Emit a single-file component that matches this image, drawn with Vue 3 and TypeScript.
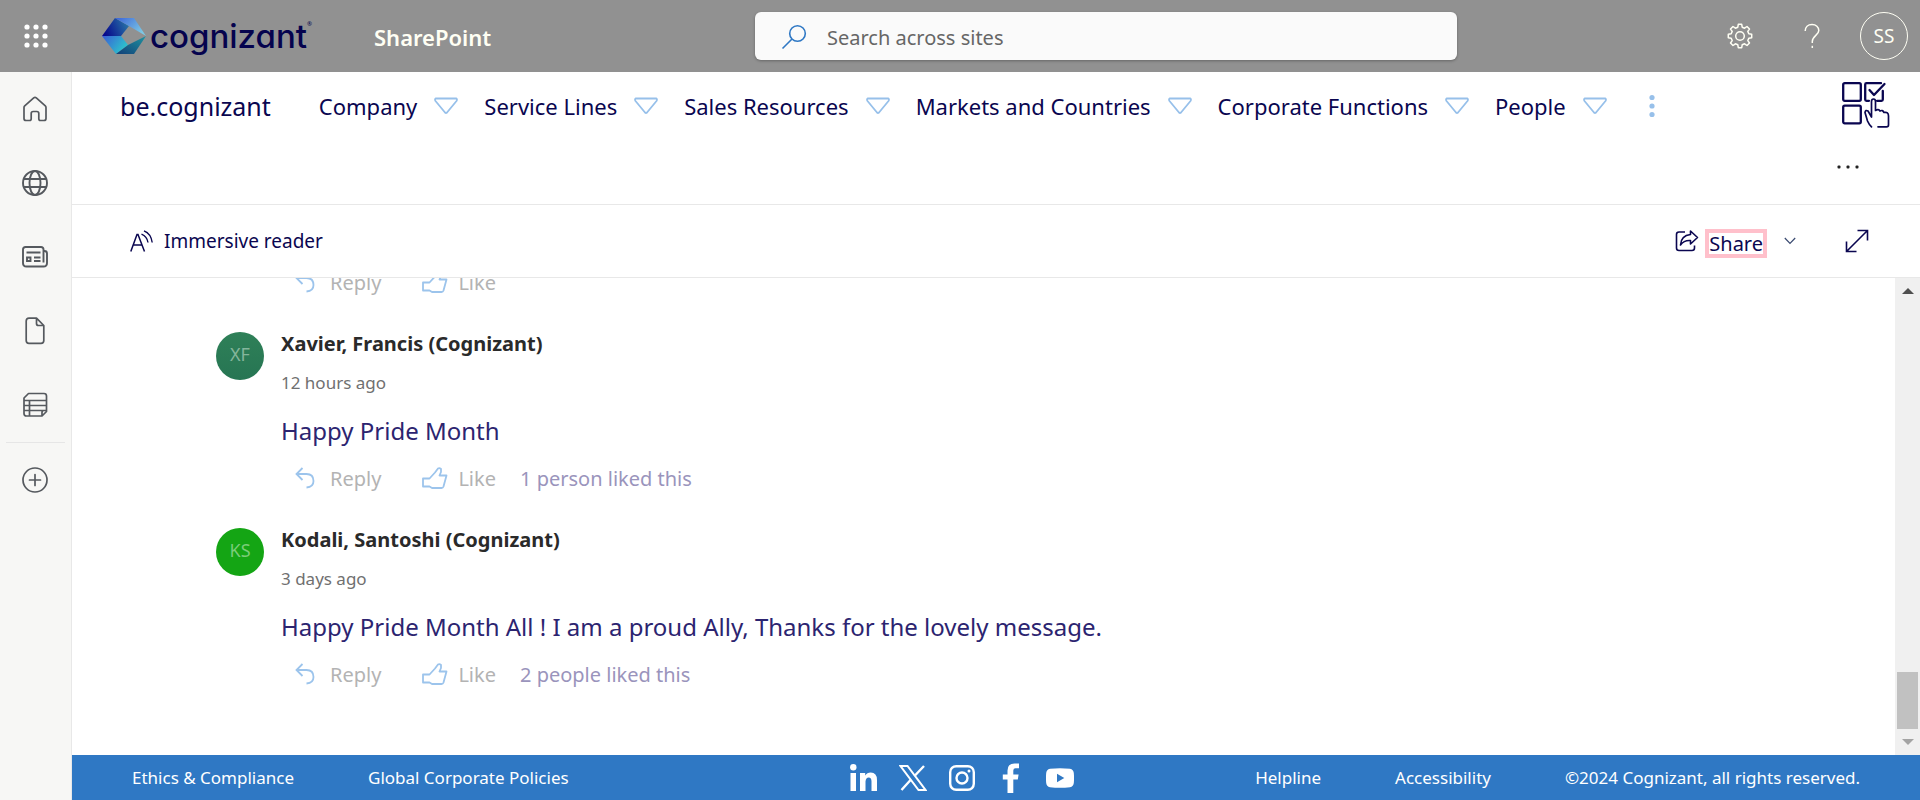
<script setup lang="ts">
interface Comment {
  initials: string
  tone: string
  author: string
  time: string
  text: string
  likes: string
}

const navItems: string[] = [
  'Company',
  'Service Lines',
  'Sales Resources',
  'Markets and Countries',
  'Corporate Functions',
  'People',
]

const comments: Comment[] = [
  {
    initials: '',
    tone: '',
    author: '',
    time: '',
    text: '',
    likes: '',
  },
  {
    initials: 'XF',
    tone: 'teal',
    author: 'Xavier, Francis (Cognizant)',
    time: '12 hours ago',
    text: 'Happy Pride Month',
    likes: '1 person liked this',
  },
  {
    initials: 'KS',
    tone: 'green',
    author: 'Kodali, Santoshi (Cognizant)',
    time: '3 days ago',
    text: 'Happy Pride Month All ! I am a proud Ally, Thanks for the lovely message.',
    likes: '2 people liked this',
  },
]

const dots: number[] = [3, 12, 21]
</script>

<template>
  <div class="app">
    <header class="suite">
      <div class="suite-left">
        <button class="icon-btn waffle" type="button" aria-label="App launcher">
          <svg width="24" height="24" viewBox="0 0 24 24" fill="#fff">
            <template v-for="y in dots" :key="y">
              <circle v-for="x in dots" :key="x" :cx="x" :cy="y" r="2.6" />
            </template>
          </svg>
        </button>
        <a class="logo" href="#" aria-label="Cognizant home">
          <svg width="44" height="36" viewBox="0 0 44 36">
            <defs>
              <linearGradient id="g1" x1="0" y1="0.6" x2="1" y2="0.3">
                <stop offset="0" stop-color="#06068c" />
                <stop offset="1" stop-color="#2a78a8" />
              </linearGradient>
              <linearGradient id="g2" x1="0" y1="0" x2="1" y2="0.6">
                <stop offset="0" stop-color="#3a62d8" />
                <stop offset="1" stop-color="#7cc8e4" />
              </linearGradient>
              <linearGradient id="g3" x1="0" y1="0" x2="1" y2="0.5">
                <stop offset="0" stop-color="#3a5cd6" />
                <stop offset="1" stop-color="#2cc4cc" />
              </linearGradient>
              <linearGradient id="g4" x1="0" y1="1" x2="1" y2="0">
                <stop offset="0" stop-color="#123f78" />
                <stop offset="1" stop-color="#1f93a0" />
              </linearGradient>
            </defs>
            <path d="M13 0 27 8 19 18H0Z" fill="url(#g1)" />
            <path d="M13 0H32L44 18 27 8Z" fill="url(#g2)" />
            <path d="M0 18H19L26 27 14 36Z" fill="url(#g3)" />
            <path d="M44 18 32 36H14L26 27Z" fill="url(#g4)" />
          </svg>
          <span class="wordmark">cognizant</span><span class="reg">®</span>
        </a>
        <a class="product" href="#">SharePoint</a>
      </div>
      <label class="search">
        <svg width="26" height="26" viewBox="0 0 26 26" fill="none" stroke="#2f78c4" stroke-width="1.6">
          <circle cx="16.5" cy="9.5" r="7.8" />
          <path d="M11 15 1.5 24.5" />
        </svg>
        <input type="search" placeholder="Search across sites" aria-label="Search across sites" />
      </label>
      <div class="suite-right">
        <button class="icon-btn" type="button" aria-label="Settings">
          <svg width="26" height="26" viewBox="0 0 26 26" fill="none" stroke="#fffff4" stroke-width="1.5" stroke-linejoin="round">
            <path d="M10.8 4.2 11.3 1.3H14.7L15.2 4.2 17.6 5.2 20 3.5 22.5 6 20.8 8.4 21.8 10.8 24.7 11.3V14.7L21.8 15.2 20.8 17.6 22.5 20 20 22.5 17.6 20.8 15.2 21.8 14.7 24.7H11.3L10.8 21.8 8.4 20.8 6 22.5 3.5 20 5.2 17.6 4.2 15.2 1.3 14.7V11.3L4.2 10.8 5.2 8.4 3.5 6 6 3.5 8.4 5.2Z" />
            <circle cx="13" cy="13" r="4.3" />
          </svg>
        </button>
        <button class="icon-btn" type="button" aria-label="Help">
          <svg width="16" height="26" viewBox="0 0 16 26" fill="none" stroke="#fffff4" stroke-width="1.5">
            <path d="M1.2 8C1.2 4 4 1.5 8 1.5S14.8 4 14.8 7.500C14.800 12 8.300 13 8.300 18.500V20" />
            <path d="M8.300 22.800V25" />
          </svg>
        </button>
        <button class="me" type="button" aria-label="Account">SS</button>
      </div>
    </header>

    <div class="body">
      <nav class="rail" aria-label="App bar">
        <a href="#" aria-label="Home">
          <svg width="26" height="26" viewBox="0 0 26 26" fill="none" stroke="#55595e" stroke-width="1.7" stroke-linejoin="round">
            <path d="M2 11.500Q2 10.500 2.700 9.800L11.700 1.900Q13 .9 14.300 1.900L23.300 9.800Q24 10.500 24 11.500V22.500Q24 24.500 22 24.500H18.500Q16.800 24.500 16.800 22.800V17.500Q16.800 15.500 14.800 15.500H11.200Q9.200 15.500 9.200 17.500V22.800Q9.200 24.500 7.500 24.500H4Q2 24.500 2 22.500Z" />
          </svg>
        </a>
        <a href="#" aria-label="Sites">
          <svg width="26" height="26" viewBox="0 0 26 26" fill="none" stroke="#55595e" stroke-width="1.9">
            <circle cx="13" cy="13" r="12" />
            <ellipse cx="13" cy="13" rx="5.500" ry="12" />
            <path d="M2 9H24M2 17H24" />
          </svg>
        </a>
        <a href="#" aria-label="News">
          <svg width="26" height="22" viewBox="0 0 26 22" fill="none" stroke="#55595e" stroke-width="1.9">
            <path d="M21.500 5V3.500Q21.500 1 19 1H3.500Q1 1 1 3.500V17Q1 20.500 4.500 20.500H21.500Q25 20.500 25 17V7.500Q25 5 22.500 5H21.500V16.500M4.500 6.500H18.500M12 11.500H18.500M12 15H18.500M5 11.500H8.500V15H5Z" />
          </svg>
        </a>
        <a href="#" aria-label="Files">
          <svg width="20" height="28" viewBox="0 0 20 28" fill="none" stroke="#55595e" stroke-width="1.7" stroke-linejoin="round">
            <path d="M11.500 1.200H4Q1.200 1.200 1.200 4V23.500Q1.200 26.300 4 26.300H16Q18.800 26.300 18.800 23.500V8.500ZM11.500 1.200V6.500Q11.500 8.500 13.500 8.500H18.800" />
          </svg>
        </a>
        <a href="#" aria-label="Lists">
          <svg width="26" height="26" viewBox="0 0 26 26" fill="none" stroke="#55595e" stroke-width="1.7" stroke-linejoin="round">
            <path d="M6.500 1.500H22Q24.500 1.500 24.500 4V19.500L20 24H4.500Q2 24 2 21.500V6ZM2 8.500H24.500M2 13.500H24.500M2 18.500H24.500M7.500 8.500V24M20 24V20.500Q20 18.500 22 18.500" />
          </svg>
        </a>
        <hr />
        <a href="#" aria-label="Create">
          <svg width="26" height="26" viewBox="0 0 26 26" fill="none" stroke="#55595e" stroke-width="1.7" stroke-linecap="round">
            <circle cx="13" cy="13" r="12" />
            <path d="M13 7.500V18.500M7.500 13H18.500" />
          </svg>
        </a>
      </nav>

      <div class="page">
        <div class="site-bar">
          <nav class="site-nav" aria-label="Site">
            <a class="site-title" href="#">be.cognizant</a>
            <button v-for="item in navItems" :key="item" class="nav-item" type="button">
              {{ item }}
              <svg width="24" height="18" viewBox="0 0 24 18" fill="none" stroke="#97c0ea" stroke-width="1.8" stroke-linejoin="round">
                <path d="M1.500 1.500H22.500Q23.400 2.500 22.500 4L13 15.500Q12 16.500 11 15.500L1.500 4Q.6 2.500 1.500 1.500Z" />
              </svg>
            </button>
            <button class="icon-btn more-nav" type="button" aria-label="More navigation">
              <svg width="6" height="24" viewBox="0 0 6 24" fill="#97c0ea">
                <circle cx="3" cy="3.500" r="2.600" />
                <circle cx="3" cy="12" r="2.600" />
                <circle cx="3" cy="20.500" r="2.600" />
              </svg>
            </button>
          </nav>
          <div class="site-tools">
            <button class="icon-btn" type="button" aria-label="My apps">
              <svg width="48" height="46" viewBox="0 0 48 46" fill="none" stroke="#0a0650" stroke-width="2.300" stroke-linejoin="round" stroke-linecap="round">
                <rect x="1.200" y="1.200" width="17.600" height="17.600" rx="1.500" />
                <rect x="1.200" y="23.700" width="17.600" height="17.600" rx="1.500" />
                <path d="M27 18.800H24.500Q23.200 18.800 23.200 17.500V2.500Q23.200 1.200 24.500 1.200H39M40.800 9V17.500Q40.800 18.800 39.500 18.800H35" />
                <path d="M27.500 8 32 13 42.500 2" />
                <path d="M29.500 35V19.500Q29.500 17 31.500 17T33.500 19.500V28.500Q36.500 26.500 38 29Q40.500 27.500 42 30.500Q46.500 29.500 46.500 34V43Q46.500 44.800 44.500 44.800H36M29.500 35 26 29Q23.500 27.500 23 30.500L25.500 39Q27 42.500 29.500 44.800" stroke-width="1.700" />
              </svg>
            </button>
            <button class="icon-btn ellipsis" type="button" aria-label="More options">
              <svg width="22" height="4" viewBox="0 0 22 4" fill="#222">
                <rect x="0.500" y="0.500" width="3" height="3" rx="1" />
                <rect x="9.500" y="0.500" width="3" height="3" rx="1" />
                <rect x="18.500" y="0.500" width="3" height="3" rx="1" />
              </svg>
            </button>
          </div>
        </div>

        <div class="command-bar">
          <button class="command" type="button">
            <svg width="24" height="22" viewBox="0 0 24 22" fill="none" stroke="#0a0650" stroke-width="1.500">
              <path d="M.8 21.500 7 4.500H8L14.500 21.500M3.200 15H12" />
              <path d="M11.500 4.200Q17 6.500 18 12.500M14 .8Q21 3.500 22.200 12.500" stroke-width="1.400" />
            </svg>
            Immersive reader
          </button>
          <div class="command-right">
            <button class="share" type="button">
              <svg width="24" height="22" viewBox="0 0 24 22" fill="none" stroke="#0a0650" stroke-width="1.600" stroke-linejoin="round">
                <path d="M10 2H4Q1.500 2 1.500 4.500V18Q1.500 20.500 4 20.500H17Q19.500 20.500 19.500 18V15.500" />
                <path d="M15.500 1 22.500 7.500 15.500 14V10.500Q9 10 5.500 15Q6 5.500 15.500 4.500Z" />
              </svg>
              <span class="share-label">Share</span>
              <svg width="12" height="8" viewBox="0 0 12 8" fill="none" stroke="#3a4a70" stroke-width="1.200">
                <path d="M.8 1 6 6.500 11.200 1" />
              </svg>
            </button>
            <button class="icon-btn" type="button" aria-label="Expand content">
              <svg width="24" height="24" viewBox="0 0 24 24" fill="none" stroke="#0a0650" stroke-width="1.600">
                <path d="M2 22 22 2M12.500 1.500H22.500V11.500M1.500 12.500V22.500H11.500" />
              </svg>
            </button>
          </div>
        </div>

        <div class="scroller">
          <main class="comments">
            <article v-for="(c, i) in comments" :key="i" class="comment">
              <div v-if="c.initials" class="avatar" :class="c.tone">{{ c.initials }}</div>
              <div class="comment-body">
                <template v-if="c.author">
                  <h3>{{ c.author }}</h3>
                  <p class="time">{{ c.time }}</p>
                  <p class="text">{{ c.text }}</p>
                </template>
                <div class="actions">
                  <button class="reply" type="button">
                    <svg width="20" height="22" viewBox="0 0 20 22" fill="none" stroke="#9cc4ec" stroke-width="1.800">
                      <path d="M7.500 1 1.500 7 7.500 13M1.500 7H11.500Q18.500 7 18.500 14Q18.500 20 11.500 20.500" />
                    </svg>
                    Reply
                  </button>
                  <button class="like" type="button">
                    <svg width="26" height="22" viewBox="0 0 26 22" fill="none" stroke="#9cc4ec" stroke-width="1.800" stroke-linejoin="round">
                      <path d="M1 11.500H7.500L13 5.500 16 1.500Q17.500 .5 19 2V5L17.500 8.500H24.500L21.500 19.500Q21 21 19.500 21H10L7.500 19.500H1Z" />
                    </svg>
                    Like
                  </button>
                  <span v-if="c.likes" class="likes">{{ c.likes }}</span>
                </div>
              </div>
            </article>
          </main>
          <div class="scrollbar" aria-hidden="true">
            <svg width="12" height="6" viewBox="0 0 12 6"><path d="M0 6 6 0 12 6Z" fill="#4f4f4f" /></svg>
            <div class="track"><div class="thumb"></div></div>
            <svg width="12" height="6" viewBox="0 0 12 6"><path d="M0 0H12L6 6Z" fill="#a3a3a3" /></svg>
          </div>
        </div>

        <footer class="footer">
          <div class="foot-left">
            <a href="#">Ethics &amp; Compliance</a>
            <a href="#">Global Corporate Policies</a>
          </div>
          <div class="social">
            <a href="#" aria-label="LinkedIn">
              <svg width="28" height="30" viewBox="0 0 28 30" fill="#fff">
                <circle cx="3.300" cy="4.300" r="3.200" />
                <path d="M.5 10H6V28H.5ZM10 10H15.200V12.500Q17 9.500 20.700 9.500Q27 9.500 27 17V28H21.500V18.500Q21.500 14.500 18.700 14.500T15.500 18.500V28H10Z" />
              </svg>
            </a>
            <a href="#" aria-label="X">
              <svg width="28" height="26" viewBox="0 0 28 26">
                <path d="M1.500 1H8.500L26.500 25H19.500Z" fill="none" stroke="#fff" stroke-width="2" />
                <path d="M2.500 25 12 14.500M15.500 11 25 1" stroke="#fff" stroke-width="2.400" />
              </svg>
            </a>
            <a href="#" aria-label="Instagram">
              <svg width="26" height="26" viewBox="0 0 26 26" fill="none" stroke="#fff" stroke-width="2.400">
                <rect x="1.200" y="1.200" width="23.600" height="23.600" rx="6" />
                <circle cx="13" cy="13" r="5.500" />
                <circle cx="20" cy="6" r="1.500" fill="#fff" stroke="none" />
              </svg>
            </a>
            <a href="#" aria-label="Facebook">
              <svg width="18" height="30" viewBox="0 0 18 30" fill="#fff">
                <path d="M5.500 30V16.500H.8V11.500H5.500V7.500Q5.500 .5 12.500 .5H17V5.300H13.500Q11.300 5.300 11.300 7.500V11.500H16.600L15.800 16.500H11.300V30Z" />
              </svg>
            </a>
            <a href="#" aria-label="YouTube">
              <svg width="28" height="20" viewBox="0 0 28 20">
                <path d="M4 .8Q14-.5 24 .8 27.500 1.500 27.800 5 28.300 10 27.800 15 27.500 18.500 24 19.200 14 20.500 4 19.200 .5 18.500 .2 15-.3 10 .2 5 .5 1.500 4 .8Z" fill="#fff" />
                <path d="M11 5.800V14.200L18.300 10Z" fill="#2f78c4" />
              </svg>
            </a>
          </div>
          <div class="foot-right">
            <a href="#">Helpline</a>
            <a href="#">Accessibility</a>
            <span>©2024 Cognizant, all rights reserved.</span>
          </div>
        </footer>
      </div>
    </div>
  </div>
</template>

<style>
body {
  margin: 0;
}
</style>

<style scoped>
.app {
  height: 100vh;
  display: flex;
  flex-direction: column;
  font-family: "Noto Sans", "Open Sans", sans-serif;
  font-size: 20px;
  color: #0a0650;
  background: #fff;
}
* {
  box-sizing: border-box;
}
button {
  font: inherit;
  color: inherit;
  background: none;
  border: 0;
  padding: 0;
  cursor: pointer;
}
a {
  color: inherit;
  text-decoration: none;
}
svg {
  display: block;
  flex: none;
}
.icon-btn {
  display: flex;
  align-items: center;
  justify-content: center;
}
.suite {
  flex: none;
  display: grid;
  grid-template-columns: 755fr 702fr 463fr;
  align-items: center;
  height: 72px;
  background: #919191;
  color: #fffff4;
}
.suite-left {
  display: flex;
  align-items: center;
}
.waffle {
  width: 72px;
}
.logo {
  display: flex;
  align-items: center;
  width: 272px;
  padding-left: 30px;
  margin-right: 30px;
}
.wordmark {
  margin-left: 4px;
  font-family: Inter, Lato, sans-serif;
  font-size: 33px;
  line-height: 40px;
  font-weight: 500;
  font-feature-settings: "cv11", "ss03";
  color: #05034e;
}
.reg {
  align-self: flex-start;
  font-size: 6px;
  line-height: 16px;
  color: #05034e;
}
.product {
  font-size: 22px;
  font-weight: 600;
  padding-top: 2px;
}
.search {
  display: flex;
  align-items: center;
  gap: 20px;
  height: 48px;
  padding: 2px 26px 0;
  background: #fafafa;
  border-radius: 6px;
  box-shadow: 0 1px 3px rgba(0, 0, 0, 0.3);
}
.search input {
  flex: 1;
  min-width: 0;
  border: 0;
  outline: 0;
  padding: 0;
  background: none;
  font: inherit;
  font-size: 20px;
}
.search input::placeholder {
  color: #666;
  opacity: 1;
}
.suite-right {
  display: flex;
  justify-content: flex-end;
  align-items: center;
  padding-right: 12px;
}
.suite-right .icon-btn {
  width: 72px;
}
.me {
  width: 48px;
  height: 48px;
  margin-left: 12px;
  border: 1px solid #fffff4;
  border-radius: 50%;
  font-size: 19px;
}
.body {
  flex: 1;
  min-height: 0;
  display: flex;
}
.rail {
  flex: none;
  width: 72px;
  background: #f7f7f5;
  border-right: 1px solid #e8e8e8;
}
.rail a {
  display: flex;
  align-items: center;
  justify-content: center;
  height: 74px;
  padding-right: 2px;
}
.rail hr {
  margin: 0 6px;
  border: 0;
  border-top: 1px solid #e6e6e6;
}
.page {
  flex: 1;
  min-width: 0;
  display: flex;
  flex-direction: column;
}
.site-bar {
  flex: none;
  display: flex;
  justify-content: space-between;
  border-bottom: 1px solid #e8e8e8;
  padding: 8px 30px 35px 48px;
}
.site-nav {
  display: flex;
  align-items: center;
  height: 52px;
  white-space: nowrap;
}
.site-title {
  font-size: 25px;
  margin-right: 48px;
}
.nav-item {
  display: flex;
  align-items: center;
  gap: 17px;
  margin-right: 26px;
  font-size: 22px;
}
.more-nav {
  margin-left: 16px;
}
.site-tools {
  display: flex;
  flex-direction: column;
  padding-top: 2px;
  gap: 37px;
}
.ellipsis {
  align-self: flex-start;
  margin-left: -5px;
}
.command-bar {
  flex: none;
  display: flex;
  justify-content: space-between;
  align-items: center;
  height: 73px;
  padding: 0 51px 0 58px;
  border-bottom: 1px solid #e8e8e8;
}
.command {
  display: flex;
  align-items: center;
  gap: 10px;
  font-size: 19px;
}
.command-right {
  display: flex;
  align-items: center;
  gap: 49px;
}
.share {
  display: flex;
  align-items: center;
}
.share-label {
  border: 4px solid #ffc0cb;
  font-size: 20px;
  line-height: 21px;
  margin: 5px 17px 0 6px;
}
.scroller {
  flex: 1;
  min-height: 0;
  display: flex;
}
.comments {
  flex: 1;
  min-width: 0;
  overflow: hidden;
  display: flex;
  flex-direction: column;
  justify-content: flex-end;
  gap: 26px;
  padding: 0 24px 61px 144px;
}
.comment {
  display: grid;
  grid-template-columns: 48px 1fr;
  column-gap: 17px;
}
.avatar {
  width: 48px;
  height: 48px;
  margin-top: 4px;
  border-radius: 50%;
  text-align: center;
  font-size: 18px;
  line-height: 44px;
}
.avatar.teal {
  background: linear-gradient(#2f8058, #267553);
  color: #84b59b;
}
.avatar.green {
  background: #14a514;
  color: #7acc78;
}
.comment-body {
  grid-column: 2;
}
.comment h3 {
  margin: 0;
  font-size: 20px;
  line-height: 32px;
  font-weight: 700;
  color: #2a2a2a;
}
.comment p {
  margin: 0;
}
.time {
  padding-top: 7px;
  font-size: 17px;
  line-height: 32px;
  color: #707070;
}
.comment .text {
  padding-top: 14px;
  font-size: 24px;
  line-height: 36px;
  color: #2c2470;
}
.actions {
  display: flex;
  align-items: center;
  height: 40px;
  margin-top: 9px;
  padding-left: 14px;
  font-size: 20px;
  color: #b3b3b3;
}
.reply,
.like {
  display: flex;
  align-items: center;
}
.reply {
  gap: 15px;
  margin-right: 41px;
}
.like {
  gap: 10px;
}
.likes {
  margin-left: 24px;
  color: #9a94bc;
}
.scrollbar {
  flex: none;
  width: 25px;
  display: flex;
  flex-direction: column;
  align-items: center;
  padding: 10px 0;
  background: #f0f0f0;
}
.track {
  flex: 1;
  align-self: stretch;
  display: flex;
  flex-direction: column;
  justify-content: flex-end;
  padding: 10px 2px;
}
.thumb {
  height: 57px;
  background: #c1c1c1;
}
.footer {
  flex: none;
  display: grid;
  grid-template-columns: 707fr auto 774fr;
  align-items: center;
  height: 45px;
  padding: 0 60px;
  background: #2f78c4;
  color: #fff;
  font-size: 17px;
  white-space: nowrap;
}
.foot-left,
.foot-right,
.social {
  display: flex;
  align-items: center;
}
.foot-left,
.foot-right {
  gap: 74px;
}
.foot-right {
  justify-content: flex-end;
}
.social a {
  display: flex;
  justify-content: center;
  width: 49px;
}
</style>
